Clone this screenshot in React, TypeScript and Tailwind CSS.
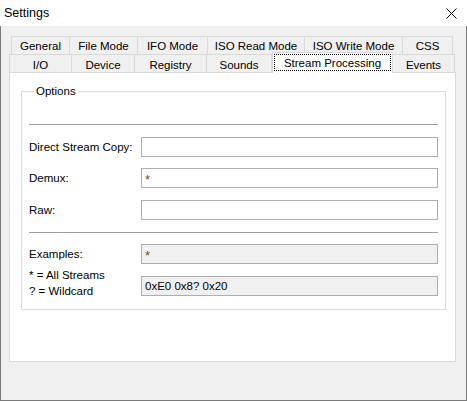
import React from 'react';

const row1 = [
  { name: 'General', w: 59 },
  { name: 'File Mode', w: 68 },
  { name: 'IFO Mode', w: 70 },
  { name: 'ISO Read Mode', w: 97 },
  { name: 'ISO Write Mode', w: 98 },
  { name: 'CSS', w: 50 },
];

const row2 = [
  { name: 'I/O', w: 63 },
  { name: 'Device', w: 63 },
  { name: 'Registry', w: 72 },
  { name: 'Sounds', w: 65 },
  { name: 'Stream Processing', w: 121, active: true },
  { name: 'Events', w: 62 },
];

const Field = ({ value, readOnly, accent }: { value?: string; readOnly?: boolean; accent?: boolean }) => (
  <div
    className={`w-[297px] h-[20px] border border-[#adadad] flex items-center pl-[3px] ${readOnly ? 'bg-[#f0f0f0]' : 'bg-white'} ${accent ? 'text-[#7a4a10] text-[13px] pt-[3px]' : 'text-black'}`}
  >
    {value}
  </div>
);

const App = () => {
  return (
    <div className="w-[467px] h-[401px] bg-white text-[11.5px] text-black font-['Liberation_Sans',Arial,sans-serif] leading-[16px] select-none">
      {/* Title bar */}
      <div className="h-[26px] flex items-center justify-between pl-[4px] pr-[10px] bg-white">
        <span className="text-[12.5px] leading-[20px]">Settings</span>
        <svg width="11" height="11" viewBox="0 0 11 11" className="mt-[1px]">
          <path d="M0.5 0.5 L10.5 10.5 M10.5 0.5 L0.5 10.5" stroke="#000" strokeWidth="1" />
        </svg>
      </div>

      {/* Body */}
      <div className="h-[375px] bg-[#f0f0f0] border-l border-r border-b border-[#7a7a7a] pl-[8px] pt-[10px]">
        {/* Tab rows */}
        <div className="flex ml-[2px] h-[18px]">
          {row1.map((t, i) => (
            <div
              key={t.name}
              style={{ width: t.w }}
              className={`h-[18px] border-t border-r border-[#d9d9d9] ${i === 0 ? 'border-l' : ''} flex items-center justify-center`}
            >
              {t.name}
            </div>
          ))}
        </div>
        <div className="flex h-[18px] items-end relative z-10">
          {row2.map((t, i) =>
            t.active ? (
              <div
                key={t.name}
                style={{ width: t.w }}
                className="h-[21px] -mb-px bg-white border-t border-l border-r border-[#d9d9d9] flex items-start justify-center pt-[1px] px-[1px]"
              >
                <span className="w-full h-[17px] border border-dotted border-black flex items-center justify-center">
                  {t.name}
                </span>
              </div>
            ) : (
              <div
                key={t.name}
                style={{ width: t.w }}
                className={`h-[18px] border-t border-r border-[#d9d9d9] ${i === 0 ? 'border-l' : ''} flex items-center justify-center pt-[2px]`}
              >
                {t.name}
              </div>
            )
          )}
        </div>

        {/* Panel */}
        <div className="w-[447px] h-[290px] bg-white border border-[#d9d9d9] pt-[10px] pl-[11px]">
          <fieldset className="w-[425px] border border-[#dcdcdc] pl-[7px] pr-[7px] pb-[10px]">
            <legend className="ml-[5px] px-[2px] leading-[16px]">Options</legend>
            <div className="mt-[25px] h-px bg-[#a0a0a0]" />

            <div className="mt-[12px] flex items-center">
              <div className="w-[112px]">Direct Stream Copy:</div>
              <Field />
            </div>
            <div className="mt-[11px] flex items-center">
              <div className="w-[112px]">Demux:</div>
              <Field value="*" accent />
            </div>
            <div className="mt-[12px] flex items-center">
              <div className="w-[112px]">Raw:</div>
              <Field />
            </div>

            <div className="mt-[12px] h-px bg-[#a0a0a0]" />

            <div className="mt-[11px] flex items-center">
              <div className="w-[112px]">Examples:</div>
              <Field value="*" readOnly accent />
            </div>
            <div className="mt-[3px] flex items-start">
              <div className="w-[112px] leading-[16px]">
                <div>* = All Streams</div>
                <div>? = Wildcard</div>
              </div>
              <div className="mt-[9px]">
                <Field value="0xE0 0x8? 0x20" readOnly />
              </div>
            </div>
          </fieldset>
        </div>
      </div>
    </div>
  );
};

export default App;
